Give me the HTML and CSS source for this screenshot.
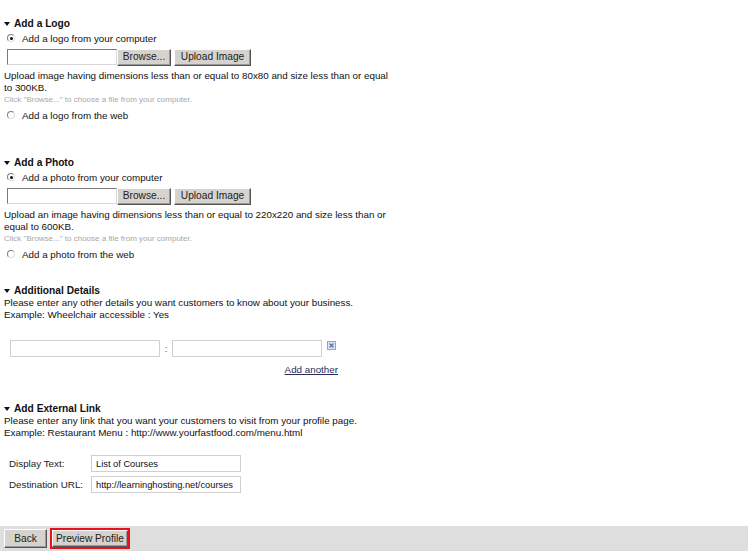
FILE: index.html
```html
<!DOCTYPE html>
<html lang="en">
<head>
  <meta charset="UTF-8">
  <title>Edit Profile</title>
  <link rel="stylesheet" href="styles.css">
</head>
<body>

  <div class="page">

    <div class="section logo">
      <h2 class="sec-title"><span class="arrow"></span>Add a Logo</h2>
      <div class="opt"><span class="radio checked"></span>Add a logo from your computer</div>
      <div class="upload-row">
        <span class="file-box"></span>
        <span class="btn browse">Browse...</span>
        <span class="btn upload">Upload Image</span>
      </div>
      <p class="hint">Upload image having dimensions less than or equal to 80x80 and size less than or equal<br>to 300KB.</p>
      <p class="note">Click "Browse..." to choose a file from your computer.</p>
      <div class="opt web"><span class="radio"></span>Add a logo from the web</div>
    </div>

    <div class="section photo">
      <h2 class="sec-title"><span class="arrow"></span>Add a Photo</h2>
      <div class="opt"><span class="radio checked"></span>Add a photo from your computer</div>
      <div class="upload-row">
        <span class="file-box"></span>
        <span class="btn browse">Browse...</span>
        <span class="btn upload">Upload Image</span>
      </div>
      <p class="hint">Upload an image having dimensions less than or equal to 220x220 and size less than or<br>equal to 600KB.</p>
      <p class="note">Click "Browse..." to choose a file from your computer.</p>
      <div class="opt web"><span class="radio"></span>Add a photo from the web</div>
    </div>

    <div class="section details">
      <h2 class="sec-title"><span class="arrow"></span>Additional Details</h2>
      <p class="text">Please enter any other details you want customers to know about your business.</p>
      <p class="text">Example: Wheelchair accessible : Yes</p>
      <div class="pair-row">
        <span class="field"></span>
        <span class="colon">:</span>
        <span class="field"></span>
        <span class="remove">
          <svg width="9" height="9" viewBox="0 0 9 9">
            <rect x="0.5" y="0.5" width="8" height="8" fill="#dfe6f5" stroke="#8ea2cc"/>
            <path d="M2.5 2.5 L6.5 6.5 M6.5 2.5 L2.5 6.5" stroke="#5a74ad" stroke-width="1.4"/>
          </svg>
        </span>
      </div>
      <div class="add-row"><a href="#" class="add-link">Add another</a></div>
    </div>

    <div class="section ext">
      <h2 class="sec-title"><span class="arrow"></span>Add External Link</h2>
      <p class="text">Please enter any link that you want your customers to visit from your profile page.</p>
      <p class="text">Example: Restaurant Menu : http://www.yourfastfood.com/menu.html</p>
      <div class="link-form">
        <label>Display Text:</label>
        <span class="field value">List of Courses</span>
        <label>Destination URL:</label>
        <span class="field value">http://learninghosting.net/courses</span>
      </div>
    </div>

  </div>

  <div class="footer-bar">
    <span class="btn back">Back</span>
    <span class="preview-wrap"><span class="btn preview">Preview Profile</span></span>
  </div>

</body>
</html>
```

FILE: styles.css
```css
* {
  box-sizing: border-box;
  margin: 0;
  padding: 0;
}

body {
  width: 748px;
  height: 551px;
  overflow: hidden;
  font-family: 'Liberation Sans', Arial, sans-serif;
  font-size: 9.8px;
  line-height: 12px;
  color: #111;
  background: #fff;
  display: flex;
  flex-direction: column;
}

.page {
  padding: 18px 0 0 4px;
  flex: 1;
}

.sec-title {
  font-size: 10.2px;
  font-weight: bold;
  line-height: 12px;
  display: flex;
  align-items: center;
}

.arrow {
  width: 0;
  height: 0;
  border-left: 3.5px solid transparent;
  border-right: 3.5px solid transparent;
  border-top: 4px solid #111;
  margin-right: 4px;
}

.opt {
  display: flex;
  align-items: center;
  margin-top: 3px;
  padding-left: 3px;
  height: 12px;
}

.radio {
  width: 8px;
  height: 8px;
  border-radius: 50%;
  border: 1px solid #808080;
  border-right-color: #ddd;
  border-bottom-color: #ddd;
  background: #fff;
  margin-right: 7px;
  margin-top: -2px;
  position: relative;
}

.radio.checked::after {
  content: "";
  position: absolute;
  left: 1.5px;
  top: 1.5px;
  width: 3px;
  height: 3px;
  border-radius: 50%;
  background: #111;
}

.upload-row {
  display: flex;
  align-items: center;
  margin-top: 4px;
  padding-left: 3px;
  height: 16px;
}

.file-box {
  width: 110px;
  height: 16px;
  background: #fff;
  border: 1px solid #7a7a7a;
  border-right-color: #d8d8d8;
  border-bottom-color: #d8d8d8;
}

.btn {
  display: inline-flex;
  align-items: center;
  justify-content: center;
  height: 17px;
  background: #d6d3ce;
  color: #222;
  font-size: 10.2px;
  border: 1px solid #fff;
  border-right-color: #555;
  border-bottom-color: #555;
  box-shadow: inset -1px -1px 0 #999;
}

.browse {
  width: 54px;
}

.upload {
  width: 77px;
  margin-left: 3px;
}

.hint {
  margin-top: 5px;
  width: 400px;
}

.note {
  font-size: 8px;
  color: #a8a8a8;
}

.opt.web {
  margin-top: 4px;
}

.section.photo {
  margin-top: 35px;
}

.section.details {
  margin-top: 24px;
}

.pair-row {
  display: flex;
  align-items: center;
  margin-top: 19px;
  padding-left: 6px;
  height: 17px;
}

.field {
  width: 150px;
  height: 17px;
  background: #fff;
  border: 1px solid #cfcfcf;
}

.colon {
  width: 12px;
  text-align: center;
  color: #555;
}

.remove {
  display: flex;
  margin-left: 5px;
  margin-top: -6px;
}

.add-row {
  width: 334px;
  text-align: right;
  margin-top: 7px;
}

.add-link {
  color: #2b2b5c;
  text-decoration: underline;
}

.section.ext {
  margin-top: 27px;
}

.link-form {
  display: grid;
  grid-template-columns: 82px 150px;
  row-gap: 4px;
  align-items: center;
  margin-top: 16px;
  padding-left: 5px;
}

.link-form label {
  color: #222;
}

.field.value {
  display: flex;
  align-items: center;
  padding-left: 4px;
  font-size: 9.3px;
  color: #111;
  white-space: nowrap;
  overflow: hidden;
}

.footer-bar {
  height: 25px;
  background: #dedede;
  display: flex;
  align-items: center;
  padding-left: 4px;
}

.back {
  width: 43px;
  height: 19px;
}

.preview-wrap {
  display: flex;
  margin-left: 3px;
  border: 2px solid #e8101a;
}

.preview {
  width: 76px;
  height: 17px;
}
```
